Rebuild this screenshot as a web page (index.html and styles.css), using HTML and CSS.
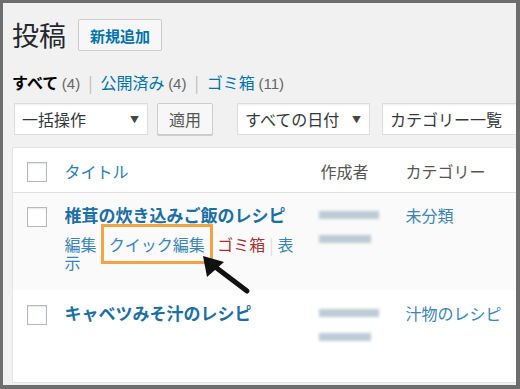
FILE: index.html
```html
<!DOCTYPE html>
<html lang="ja">
<head>
  <meta charset="UTF-8">
  <title>投稿</title>
  <link rel="stylesheet" href="styles.css">
</head>
<body>
  <div class="frame">
    <div class="heading-row">
      <h1>投稿</h1>
      <a class="add-new">新規追加</a>
    </div>

    <ul class="subsub">
      <li><b>すべて</b> <span class="count">(4)</span></li>
      <li class="bar">|</li>
      <li><a>公開済み</a> <span class="count">(4)</span></li>
      <li class="bar">|</li>
      <li><a>ゴミ箱</a> <span class="count">(11)</span></li>
    </ul>

    <div class="tablenav">
      <div class="select bulk"><span>一括操作</span><span class="caret">▼</span></div>
      <div class="btn">適用</div>
      <div class="select dates"><span>すべての日付</span><span class="caret">▼</span></div>
      <div class="select cats"><span>カテゴリー一覧</span></div>
    </div>

    <table class="posts">
      <colgroup>
        <col class="c-cb">
        <col class="c-title">
        <col class="c-author">
        <col class="c-cat">
      </colgroup>
      <thead>
        <tr>
          <th class="cb"><span class="box"></span></th>
          <th class="sortable">タイトル</th>
          <th>作成者</th>
          <th>カテゴリー</th>
        </tr>
      </thead>
      <tbody>
        <tr class="alt">
          <td class="cb"><span class="box"></span></td>
          <td>
            <a class="row-title">椎茸の炊き込みご飯のレシピ</a>
            <div class="row-actions"><a>編集</a><span class="sep">|</span><a class="marked">クイック編集</a><span class="sep">|</span><a class="trash">ゴミ箱</a><span class="sep">|</span><a>表示</a></div>
          </td>
          <td>
            <div class="blur-line"><span class="smudge" style="width:60px"></span></div>
            <div class="blur-line"><span class="smudge" style="width:52px"></span></div>
          </td>
          <td><a class="cat">未分類</a></td>
        </tr>
        <tr class="second">
          <td class="cb"><span class="box"></span></td>
          <td><a class="row-title">キャベツみそ汁のレシピ</a></td>
          <td>
            <div class="blur-line"><span class="smudge" style="width:60px"></span></div>
            <div class="blur-line"><span class="smudge" style="width:52px"></span></div>
          </td>
          <td><a class="cat">汁物のレシピ</a></td>
        </tr>
      </tbody>
    </table>

    <svg class="pointer" viewBox="3 3 513 382" width="513" height="382">
      <line x1="247" y1="291" x2="214" y2="266" stroke="#111" stroke-width="5" stroke-linecap="round"/>
      <polygon points="203,256 224,262 207,277" fill="#111"/>
    </svg>
  </div>
</body>
</html>
```

FILE: styles.css
```css
body {
  margin: 0;
  font-family: "Noto Sans CJK JP", "Liberation Sans", sans-serif;
  color: #23282d;
}

a {
  color: #0073aa;
  text-decoration: none;
}

.frame {
  position: relative;
  width: 520px;
  height: 389px;
  box-sizing: border-box;
  border-style: solid;
  border-color: #6d6d6d;
  border-width: 3px 4px 4px 3px;
  background-color: #f1f1f1;
  padding: 16px 0 0 9px;
  overflow: hidden;
}

.heading-row {
  display: flex;
  align-items: center;
  height: 32px;
}

.heading-row h1 {
  margin: 0 12px 0 0;
  font-size: 27px;
  font-weight: normal;
  line-height: 32px;
  color: #23282d;
}

.add-new {
  display: flex;
  align-items: center;
  height: 32px;
  box-sizing: border-box;
  padding: 0 11px;
  border: 1px solid #ccc;
  border-radius: 2px;
  background-color: #f7f7f7;
  font-size: 15px;
  font-weight: bold;
  color: #0073aa;
}

.subsub {
  list-style: none;
  margin: 19px 0 0;
  padding: 0;
  display: flex;
  height: 24px;
  line-height: 24px;
  font-size: 16px;
}

.subsub b {
  color: #000;
}

.subsub .count {
  font-family: "Liberation Sans", sans-serif;
  font-size: 15px;
  color: #666;
}

.subsub .bar {
  color: #bbb;
  margin: 0 8px;
}

.tablenav {
  display: flex;
  margin-top: 9px;
  height: 32px;
}

.tablenav > div {
  flex-shrink: 0;
}

.select {
  display: flex;
  justify-content: space-between;
  align-items: center;
  height: 32px;
  box-sizing: border-box;
  padding: 0 8px 0 7px;
  background-color: #fff;
  border: 1px solid #ddd;
  box-shadow: inset 0 1px 2px rgba(0, 0, 0, 0.07);
  font-size: 16px;
  color: #32373c;
}

.select .caret {
  font-size: 9px;
  color: #444;
}

.bulk {
  width: 134px;
  margin-left: 2px;
}

.dates {
  width: 133px;
  margin-left: 24px;
}

.cats {
  width: 160px;
  margin-left: 12px;
}

.btn {
  display: flex;
  align-items: center;
  justify-content: center;
  width: 56px;
  height: 32px;
  box-sizing: border-box;
  margin-left: 9px;
  border: 1px solid #ccc;
  border-radius: 2px;
  background-color: #f7f7f7;
  box-shadow: 0 1px 0 #ccc;
  font-size: 16px;
  color: #555;
}

.posts {
  margin-top: 12px;
  width: 520px;
  table-layout: fixed;
  border-collapse: collapse;
  background-color: #fff;
  border: 1px solid #e5e5e5;
}

.c-cb { width: 42px; }
.c-title { width: 256px; }
.c-author { width: 85px; }

.posts th {
  text-align: left;
  font-weight: normal;
  font-size: 16px;
  line-height: 20px;
  color: #555;
  padding: 13px 10px 11px;
  border-bottom: 1px solid #e1e1e1;
}

.posts th.sortable {
  color: #2a80b2;
}

.posts td {
  vertical-align: top;
  padding: 10px 14px 0 10px;
  font-size: 16px;
}

.posts th.cb {
  padding: 14px 0 0 14px;
  vertical-align: top;
}

.posts td.cb {
  padding: 14px 0 0 14px;
}

.posts tr.second td.cb {
  padding-top: 15px;
}

.box {
  display: block;
  width: 18px;
  height: 18px;
  border: 1px solid #b4b9be;
  background-color: #fff;
  box-shadow: inset 0 1px 2px rgba(0, 0, 0, 0.1);
}

tr.alt {
  background-color: #fafafa;
  height: 97px;
}

tr.second {
  height: 93px;
}

tr.second td {
  padding-top: 11px;
}

.row-title {
  display: block;
  font-size: 17px;
  font-weight: bold;
  line-height: 24px;
  color: #1c6fa3;
}

.row-actions {
  margin-top: 8px;
  line-height: 18px;
  font-size: 16px;
}

.row-actions a {
  color: #3a85b3;
}

.row-actions .trash {
  color: #a83232;
}

.row-actions .sep {
  color: #ddd;
  margin: 0 4px;
}

.row-actions .marked {
  outline: 3px solid #f2a445;
  outline-offset: 5px;
}

.blur-line {
  height: 24px;
  display: flex;
  align-items: center;
  margin-left: -2px;
}

.smudge {
  display: block;
  height: 8px;
  background-color: #bccbd7;
  filter: blur(1.5px);
}

.cat {
  display: block;
  line-height: 24px;
  color: #3a85b3;
}

.pointer {
  position: absolute;
  left: 0;
  top: 0;
}
```
